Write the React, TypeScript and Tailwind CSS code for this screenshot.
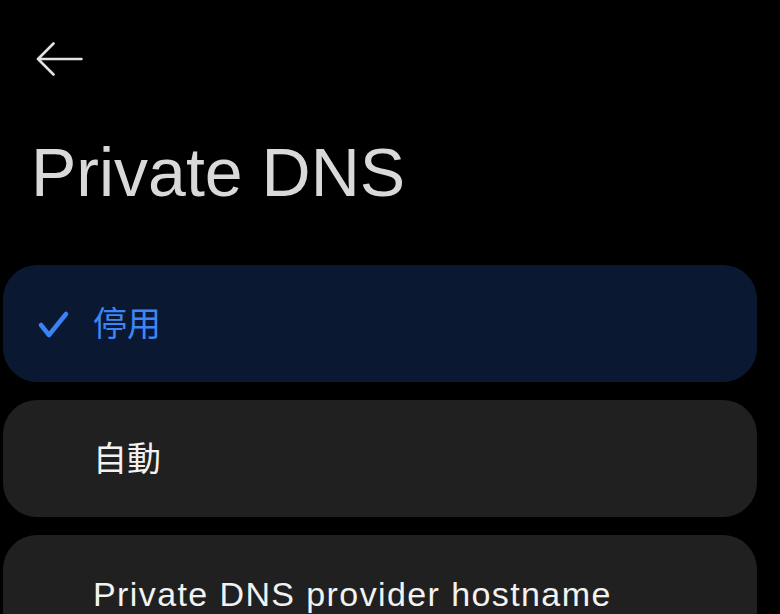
import React from "react";

const font = { fontFamily: '"Liberation Sans", "Noto Sans CJK TC", sans-serif' };

type Option = { label: string; selected?: boolean };

const OPTIONS: Option[] = [
  { label: "停用", selected: true },
  { label: "自動" },
  { label: "Private DNS provider hostname" },
];

const Check = () => (
  <svg width="34" height="30" viewBox="0 0 34 30" className="absolute left-[33px]">
    <polyline
      points="5,16 13,26 30,5"
      fill="none"
      stroke="#3b82f6"
      strokeWidth="4.5"
      strokeLinecap="round"
      strokeLinejoin="round"
    />
  </svg>
);

export default function App() {
  return (
    <div className="w-[780px] h-[614px] overflow-hidden bg-black" style={font}>
      <div className="pt-[42px] pl-[36px]">
        <svg width="47" height="34" viewBox="0 0 47 34">
          <path
            d="M45.5 17H2M17.5 1.5L2 17l15.5 15.5"
            fill="none"
            stroke="#e2e2e2"
            strokeWidth="2.6"
            strokeLinecap="round"
            strokeLinejoin="round"
          />
        </svg>
      </div>
      <h1 className="mt-[62px] ml-[31px] text-[68px] leading-none text-[#d9d9d9] font-normal">
        Private DNS
      </h1>
      <div className="mt-[59px] ml-[3px] w-[754px] flex flex-col gap-[18px]">
        {OPTIONS.map((opt, i) => (
          <div
            key={i}
            className={`relative h-[117px] rounded-[34px] flex items-center pl-[90px] ${
              opt.selected ? "bg-[#0a1931]" : "bg-[#202020]"
            }`}
          >
            {opt.selected && <Check />}
            <span
              className={`text-[34px] leading-none ${
                opt.selected ? "text-[#3d86f5]" : "text-[#f2f2f2]"
              } ${i === 2 ? "tracking-[1.4px]" : ""}`}
            >
              {opt.label}
            </span>
          </div>
        ))}
      </div>
    </div>
  );
}
